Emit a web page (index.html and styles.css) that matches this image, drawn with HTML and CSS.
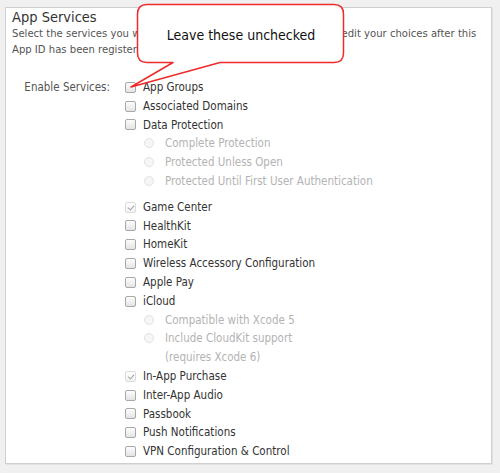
FILE: index.html
```html
<!DOCTYPE html>
<html>
<head>
<meta charset="utf-8">
<link rel="stylesheet" href="styles.css">
</head>
<body>
<div class="panel">
  <h2 class="title">App Services</h2>
  <p class="desc"><span class="line">Select the services you would like to enable in your app. You can edit your choices after this</span><br>App ID has been registered.</p>
  <div class="form">
    <div class="label">Enable Services:</div>
    <ul class="services">
      <li class="item"><span class="cb"></span>App Groups</li>
      <li class="item"><span class="cb"></span>Associated Domains</li>
      <li class="item group">
        <div class="row"><span class="cb"></span>Data Protection</div>
        <div class="sub"><span class="rb"></span>Complete Protection</div>
        <div class="sub"><span class="rb"></span>Protected Unless Open</div>
        <div class="sub"><span class="rb"></span>Protected Until First User Authentication</div>
      </li>
      <li class="item"><span class="cb checked"></span>Game Center</li>
      <li class="item"><span class="cb"></span>HealthKit</li>
      <li class="item"><span class="cb"></span>HomeKit</li>
      <li class="item"><span class="cb"></span>Wireless Accessory Configuration</li>
      <li class="item"><span class="cb"></span>Apple Pay</li>
      <li class="item group tight">
        <div class="row"><span class="cb"></span>iCloud</div>
        <div class="sub"><span class="rb"></span>Compatible with Xcode 5</div>
        <div class="sub"><span class="rb"></span><span>Include CloudKit support<br>(requires Xcode 6)</span></div>
      </li>
      <li class="item"><span class="cb checked"></span>In-App Purchase</li>
      <li class="item"><span class="cb"></span>Inter-App Audio</li>
      <li class="item"><span class="cb"></span>Passbook</li>
      <li class="item"><span class="cb"></span>Push Notifications</li>
      <li class="item"><span class="cb"></span>VPN Configuration &amp; Control</li>
    </ul>
  </div>
</div>
<div class="callout">
  <svg class="callout-shape" width="220" height="90" viewBox="0 0 220 90">
    <path d="M13 1.5 H200 Q209.5 1.5 209.5 11 V50 Q209.5 59.5 200 59.5 H86 L -3 84 L 39 59.5 H13 Q3.5 59.5 3.5 50 V11 Q3.5 1.5 13 1.5 Z" fill="#fff" stroke="#ee2a2a" stroke-width="1.5" stroke-linejoin="round"/>
  </svg>
  <div class="callout-text">Leave these unchecked</div>
</div>
</body>
</html>
```

FILE: styles.css
```css
html, body {
  margin: 0;
  padding: 0;
}
body {
  background: #f0f0f0;
  font-family: "DejaVu Sans Condensed", "DejaVu Sans", sans-serif;
  color: #333;
  width: 500px;
  height: 473px;
  position: relative;
  overflow: hidden;
}
.panel {
  box-sizing: border-box;
  margin: 7px 0 0 5px;
  width: 487px;
  height: 457px;
  background: #fff;
  border: 1px solid #cfcfcf;
  box-shadow: 1px 1px 0 #e2e2e2;
  padding: 0 0 0 6px;
  overflow: hidden;
}
.title {
  margin: 0;
  font-weight: normal;
  font-size: 14.5px;
  line-height: 18px;
  color: #333;
}
.desc {
  margin: 0;
  font-size: 11.2px;
  line-height: 16px;
  color: #555;
}
.desc .line {
  white-space: nowrap;
}
.form {
  display: flex;
  margin-top: 20px;
}
.label {
  width: 98px;
  flex: none;
  text-align: right;
  font-size: 11.5px;
  line-height: 18.8px;
  color: #555;
}
.services {
  list-style: none;
  margin: 0 0 0 15px;
  padding: 0;
  font-size: 11.5px;
  line-height: 18.8px;
  color: #333;
}
.item, .row {
  display: flex;
  align-items: center;
  height: 18.8px;
}
.item.group {
  display: block;
  height: auto;
  margin-bottom: 7px;
}
.item.group.tight {
  margin-bottom: 0;
}
.sub {
  display: flex;
  align-items: flex-start;
  padding-left: 19px;
  color: #b3b3b3;
}
.cb {
  box-sizing: border-box;
  width: 11px;
  height: 11px;
  border: 1px solid #a8a8a8;
  border-radius: 2px;
  background: linear-gradient(#fdfdfd, #e4e4e4);
  margin-right: 7px;
  flex: none;
  position: relative;
}
.cb.checked {
  border-color: #dcdcdc;
  background: linear-gradient(#fefefe, #f2f2f2);
}
.cb.checked::after {
  content: "";
  position: absolute;
  left: 3px;
  top: 1px;
  width: 3px;
  height: 5px;
  border-right: 1.5px solid #a5a5a5;
  border-bottom: 1.5px solid #a5a5a5;
  transform: rotate(40deg);
}
.rb {
  box-sizing: border-box;
  width: 10px;
  height: 10px;
  border: 1px solid #e2e2e2;
  border-radius: 50%;
  background: #f6f6f6;
  margin: 4px 11px 0 0;
  flex: none;
}
.callout {
  position: absolute;
  left: 134px;
  top: 3px;
  width: 220px;
  height: 90px;
}
.callout-shape {
  position: absolute;
  left: 0;
  top: 0;
  overflow: visible;
}
.callout-text {
  position: absolute;
  left: 4px;
  top: 24px;
  width: 206px;
  text-align: center;
  font-family: "DejaVu Sans Condensed", "DejaVu Sans", sans-serif;
  font-size: 14px;
  color: #111;
}
```
